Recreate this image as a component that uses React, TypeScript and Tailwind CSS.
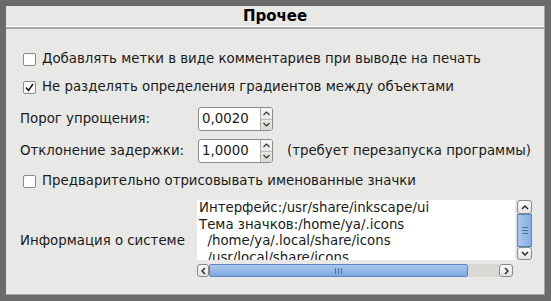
import React from "react";

const font = { fontFamily: '"DejaVu Sans", sans-serif' };

function Check({ checked }: { checked?: boolean }) {
  return (
    <div className="w-[13px] h-[13px] rounded-[2px] border border-[#8a8985] bg-white flex items-center justify-center shrink-0">
      {checked && (
        <svg width="9" height="9" viewBox="0 0 9 9">
          <path d="M1 4.5 L3.5 7.5 L8 1" stroke="#1a1a1a" strokeWidth="1.6" fill="none" />
        </svg>
      )}
    </div>
  );
}

function Spin({ value }: { value: string }) {
  return (
    <div className="flex h-[24px] w-[75px] rounded-[3px] border border-[#8a8985] bg-white overflow-hidden shrink-0">
      <div className="flex-1 flex items-center pl-[3px] text-[#1a1a1a]">{value}</div>
      <div className="w-[12px] border-l border-[#a9a8a4] flex flex-col bg-gradient-to-b from-[#f6f6f4] to-[#dcdbd8]">
        <div className="flex-1 flex items-center justify-center border-b border-[#bdbcb8]">
          <svg width="7" height="5" viewBox="0 0 7 5">
            <path d="M0.5 4 L3.5 1 L6.5 4" stroke="#333" strokeWidth="1.2" fill="none" />
          </svg>
        </div>
        <div className="flex-1 flex items-center justify-center">
          <svg width="7" height="5" viewBox="0 0 7 5">
            <path d="M0.5 1 L3.5 4 L6.5 1" stroke="#333" strokeWidth="1.2" fill="none" />
          </svg>
        </div>
      </div>
    </div>
  );
}

function ArrowBtn({ dir, className }: { dir: "up" | "down" | "left" | "right"; className?: string }) {
  const paths: Record<string, string> = {
    up: "M1 5 L4 2 L7 5",
    down: "M1 2 L4 5 L7 2",
    left: "M5 1 L2 4 L5 7",
    right: "M2 1 L5 4 L2 7",
  };
  const vert = dir === "up" || dir === "down";
  return (
    <div
      className={
        "flex items-center justify-center rounded-[3px] border border-[#8a8985] bg-gradient-to-b from-[#fbfbfa] to-[#e3e2df] shrink-0 " +
        (className || "")
      }
    >
      <svg width={vert ? 8 : 7} height={vert ? 7 : 8} viewBox={vert ? "0 0 8 7" : "0 0 7 8"}>
        <path d={paths[dir]} stroke="#222" strokeWidth="1.4" fill="none" />
      </svg>
    </div>
  );
}

export default function App() {
  return (
    <div className="w-[551px] h-[301px] bg-[#6b6c69] pt-[6px] pl-[6px]" style={font}>
      <div className="w-[539px] h-[289px] bg-[#e8e9e6] border-r border-b border-[#a5a4a0] flex flex-col">
        <div className="h-[21px] flex items-center justify-center text-[15px] font-bold text-black border-b border-white">
          Прочее
        </div>
        <div className="h-[2px] bg-[#aba6a2]" />
        <div className="flex flex-col text-[13.33px] text-[#1a1a1a] pl-[17px]">
          <div className="flex items-center gap-[6px] mt-[23px] h-[14px]">
            <Check />
            <span>Добавлять метки в виде комментариев при выводе на печать</span>
          </div>
          <div className="flex items-center gap-[6px] mt-[14px] h-[14px]">
            <Check checked />
            <span>Не разделять определения градиентов между объектами</span>
          </div>
          <div className="flex items-center mt-[13px] -ml-[3px] h-[24px]">
            <span className="w-[178px]">Порог упрощения:</span>
            <Spin value="0,0020" />
          </div>
          <div className="flex items-center mt-[8px] -ml-[3px] h-[24px]">
            <span className="w-[178px]">Отклонение задержки:</span>
            <Spin value="1,0000" />
            <span className="ml-[14px]">(требует перезапуска программы)</span>
          </div>
          <div className="flex items-center gap-[6px] mt-[11px] h-[14px]">
            <Check />
            <span>Предварительно отрисовывать именованные значки</span>
          </div>
          <div className="flex mt-[12px] -ml-[3px]">
            <div className="w-[177px] flex items-center pt-[5px]">Информация о системе</div>
            <div className="flex gap-[2px]">
              <div className="flex flex-col">
                <div className="w-[318px] h-[60px] bg-white overflow-hidden pl-[2px] leading-[16.5px] whitespace-pre">
                  <div>Интерфейс:/usr/share/inkscape/ui</div>
                  <div>Тема значков:/home/ya/.icons</div>
                  <div>  /home/ya/.local/share/icons</div>
                  <div>  /usr/local/share/icons</div>
                </div>
                <div className="flex h-[13px] mt-[4px] w-[316px] items-stretch">
                  <ArrowBtn dir="left" className="w-[12px]" />
                  <div className="flex-1 flex">
                    <div className="w-[259px] bg-gradient-to-b from-[#a9c7ee] to-[#7ea7de] border border-[#5b85c2] rounded-[2px] flex items-center justify-center">
                      <div className="flex gap-[2px]">
                        <div className="w-[1px] h-[6px] bg-[#4c6f9e]" />
                        <div className="w-[1px] h-[6px] bg-[#4c6f9e]" />
                        <div className="w-[1px] h-[6px] bg-[#4c6f9e]" />
                      </div>
                    </div>
                    <div className="flex-1 bg-[#d9d8d5]" />
                  </div>
                  <ArrowBtn dir="right" className="w-[14px]" />
                </div>
              </div>
              <div className="flex flex-col w-[15px] h-[60px]">
                <ArrowBtn dir="up" className="h-[14px]" />
                <div className="flex-1 bg-gradient-to-r from-[#a9c7ee] to-[#85aee3] border border-[#5b85c2] flex items-center justify-center">
                  <div className="flex flex-col gap-[2px]">
                    <div className="w-[6px] h-[1px] bg-[#4c6f9e]" />
                    <div className="w-[6px] h-[1px] bg-[#4c6f9e]" />
                    <div className="w-[6px] h-[1px] bg-[#4c6f9e]" />
                  </div>
                </div>
                <ArrowBtn dir="down" className="h-[13px]" />
              </div>
            </div>
          </div>
        </div>
      </div>
    </div>
  );
}
